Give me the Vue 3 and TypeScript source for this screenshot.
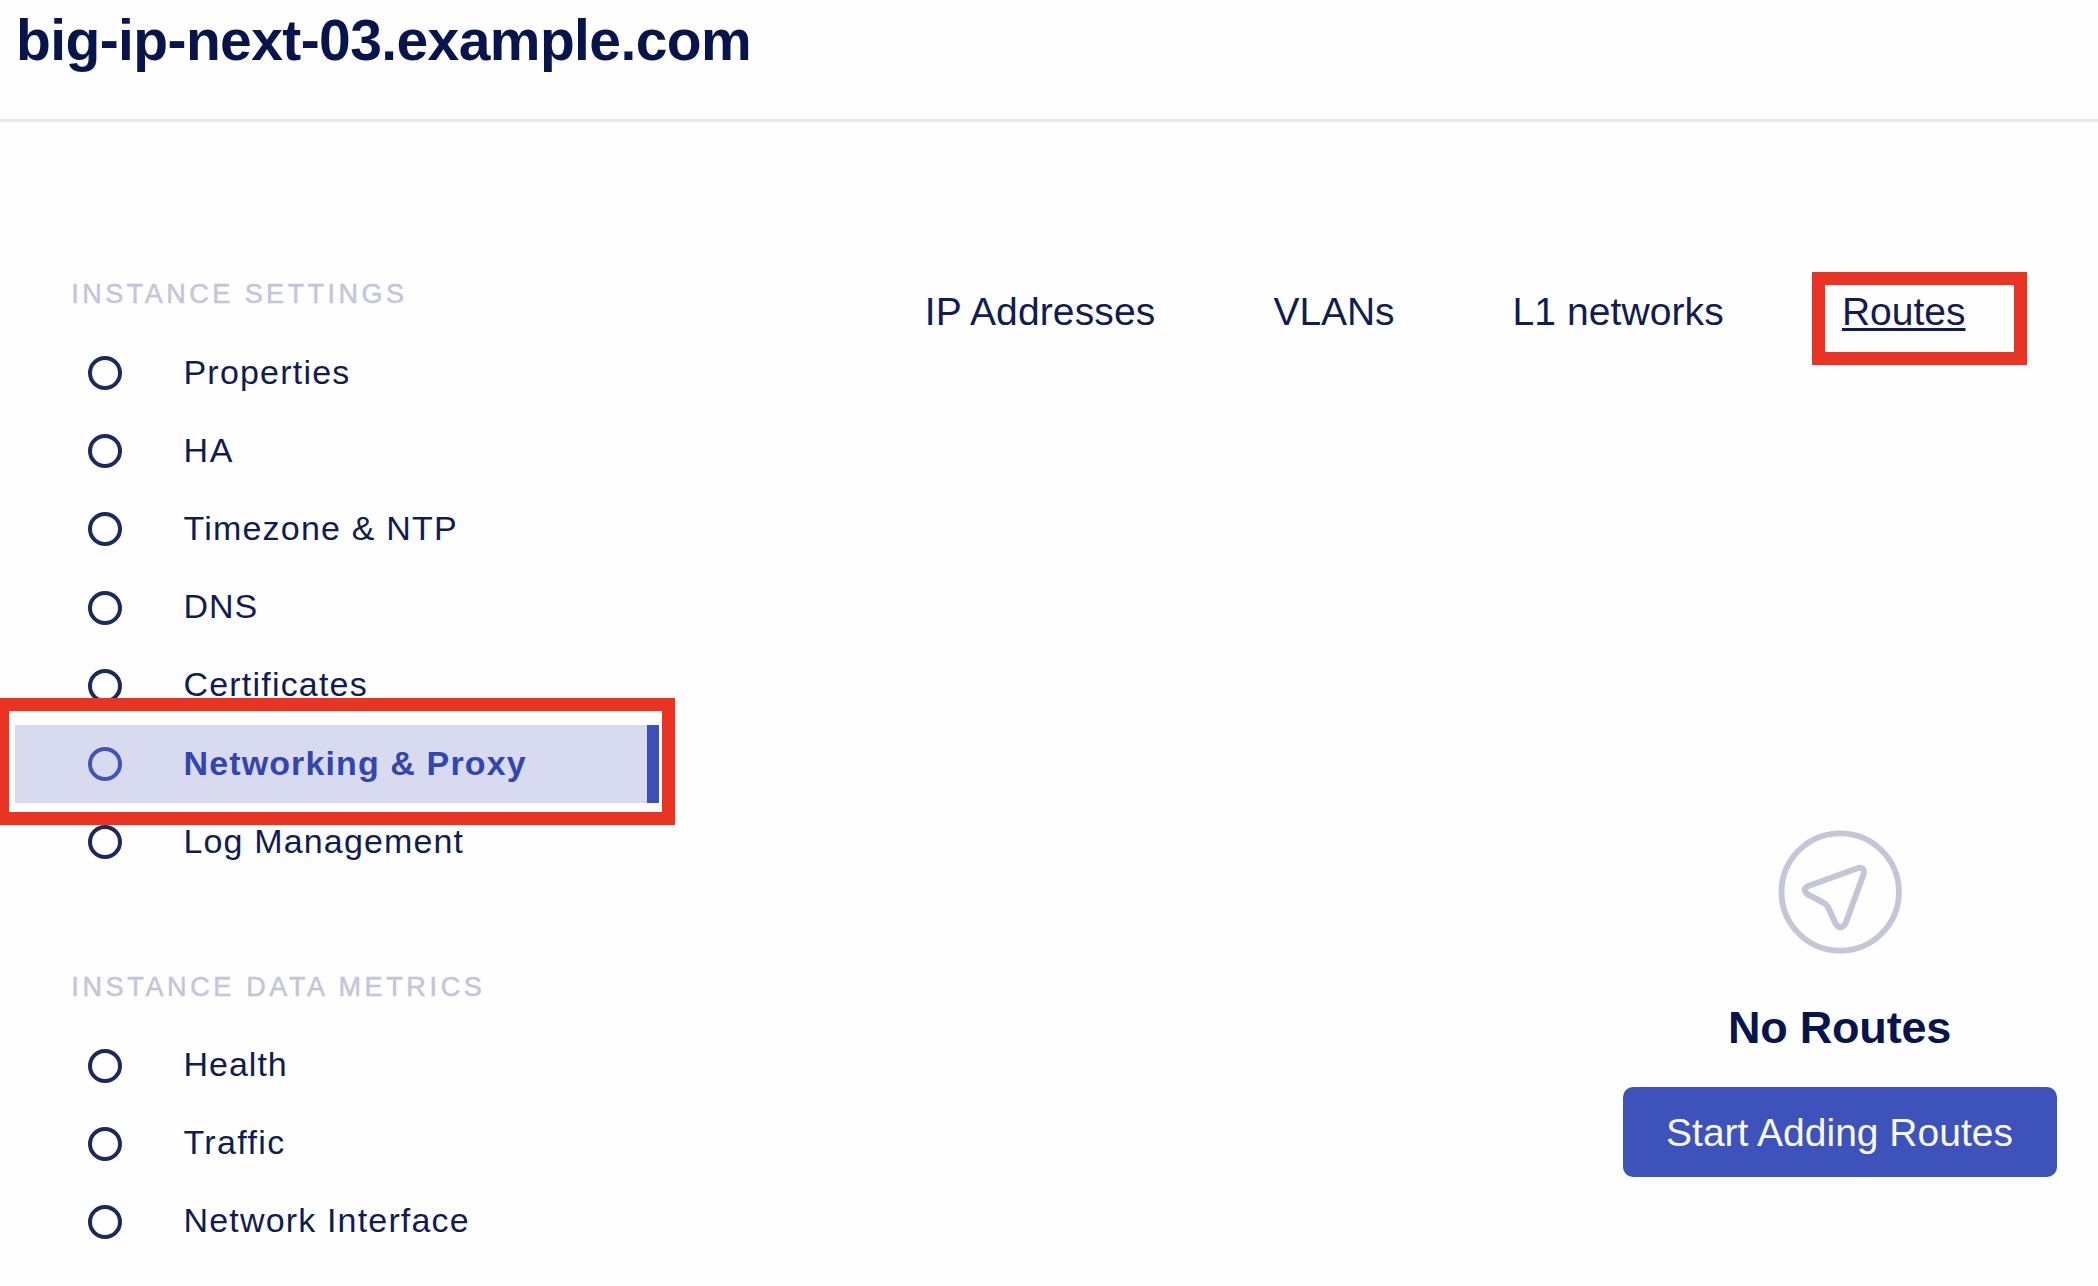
<script setup lang="ts">
interface NavItem {
  label: string
  spacing: number
  active?: boolean
}

interface NavSection {
  title: string
  spacing: number
  items: NavItem[]
}

interface Tab {
  label: string
  spacing: number
  active?: boolean
}

const sections: NavSection[] = [
  {
    title: 'INSTANCE SETTINGS',
    spacing: 3.48,
    items: [
      { label: 'Properties', spacing: 1.2 },
      { label: 'HA', spacing: 1.8 },
      { label: 'Timezone & NTP', spacing: 1.2 },
      { label: 'DNS', spacing: 1 },
      { label: 'Certificates', spacing: 1.2 },
      { label: 'Networking & Proxy', spacing: 1.12, active: true },
      { label: 'Log Management', spacing: 1.15 },
    ],
  },
  {
    title: 'INSTANCE DATA METRICS',
    spacing: 3.65,
    items: [
      { label: 'Health', spacing: 1 },
      { label: 'Traffic', spacing: 1.35 },
      { label: 'Network Interface', spacing: 1.17 },
    ],
  },
]

const tabs: Tab[] = [
  { label: 'IP Addresses', spacing: 0.12 },
  { label: 'VLANs', spacing: -0.1 },
  { label: 'L1 networks', spacing: 0.08 },
  { label: 'Routes', spacing: 0, active: true },
]
</script>

<template>
  <div class="page">
    <header class="header">
      <h1>big-ip-next-03.example.com</h1>
    </header>
    <div class="body">
      <aside class="sidebar">
        <section v-for="section in sections" :key="section.title" class="section">
          <h2 :style="{ letterSpacing: section.spacing + 'px' }">{{ section.title }}</h2>
          <ul>
            <li v-for="item in section.items" :key="item.label" :class="{ active: item.active }">
              <span class="dot"></span>
              <span class="label" :style="{ letterSpacing: item.spacing + 'px' }">{{ item.label }}</span>
              <span v-if="item.active" class="highlight nav-highlight"></span>
            </li>
          </ul>
        </section>
      </aside>
      <main class="content">
        <nav class="tabs">
          <a v-for="tab in tabs" :key="tab.label" :class="{ active: tab.active }">
            <span class="tab-label" :style="{ letterSpacing: tab.spacing + 'px' }">{{ tab.label }}</span>
            <span v-if="tab.active" class="highlight tab-highlight"></span>
          </a>
        </nav>
        <div class="empty">
          <svg width="124" height="124" viewBox="0 0 124 124" fill="none" stroke="#c3c6d6">
            <circle cx="62.2" cy="62" r="58.7" stroke-width="5.8" />
            <path
              d="M80 38 L30.5 56 Q24 59 29 64 L45 72.5 Q48.5 74 50 77 L57.5 93.5 Q62.5 101 67.5 93.5 L85.5 44.5 Q87 36.5 80 38 Z"
              stroke-width="6"
              stroke-linejoin="round"
            />
          </svg>
          <h3>No Routes</h3>
          <button type="button"><span>Start Adding Routes</span></button>
        </div>
      </main>
    </div>
  </div>
</template>

<style>
body {
  margin: 0;
  overflow: hidden;
  background: #fefefe;
}
</style>

<style scoped>
.page {
  display: flex;
  flex-direction: column;
  width: 2098px;
  height: 1286px;
  overflow: hidden;
  background: #fefefe;
  color: #101c52;
  font-family: "Liberation Sans", Arial, sans-serif;
}

h1,
h2,
h3,
ul {
  margin: 0;
  padding: 0;
  list-style: none;
}

.header {
  box-sizing: border-box;
  height: 122px;
  padding: 8px 0 0 16px;
  border-bottom: 3px solid #e7e8f2;
}

h1 {
  color: #08154c;
  font-size: 57px;
  font-weight: 700;
  line-height: 64px;
  letter-spacing: -0.6px;
  white-space: nowrap;
}

.body {
  display: flex;
  flex: 1;
}

.sidebar {
  width: 660px;
  padding-top: 156px;
}

.section + .section {
  margin-top: 89.2px;
}

h2 {
  height: 56px;
  padding-left: 71.3px;
  color: #c3c6d8;
  font-size: 27px;
  font-weight: 400;
  line-height: 32px;
  white-space: nowrap;
  -webkit-text-stroke: 0.5px #c3c6d8;
}

li {
  position: relative;
  display: flex;
  align-items: center;
  box-sizing: border-box;
  height: 78.2px;
  margin-left: 15px;
  padding-left: 72.6px;
}

li.active {
  background: #d8dbf0;
  border-right: 12px solid #3a50bb;
  width: 644.4px;
  color: #3346b0;
}

.dot {
  box-sizing: border-box;
  width: 34px;
  height: 34px;
  border: 4.4px solid #1c2960;
  border-radius: 50%;
}

.active .dot {
  border-color: #4254b8;
}

.label {
  margin-left: 61.9px;
  padding-bottom: 3px;
  font-size: 34px;
  line-height: 40px;
  white-space: nowrap;
}

.active .label {
  font-weight: 700;
}

.highlight {
  position: absolute;
  box-sizing: border-box;
  border: 13px solid #e93323;
}

.nav-highlight {
  top: -27px;
  left: -19px;
  width: 679px;
  height: 127px;
}

.content {
  display: flex;
  flex: 1;
  flex-direction: column;
}

.tabs {
  display: flex;
  padding: 168px 0 0 264.8px;
}

.tabs a {
  position: relative;
  font-size: 39px;
  line-height: 44px;
  white-space: nowrap;
}

.tabs a + a {
  margin-left: 118.2px;
}

.tabs a.active .tab-label {
  text-decoration: underline;
  text-decoration-thickness: 3px;
  text-underline-offset: 3px;
}

.tab-highlight {
  top: -18px;
  left: -30px;
  width: 215px;
  height: 93px;
}

.empty {
  display: flex;
  flex-direction: column;
  align-items: center;
  align-self: flex-end;
  width: 434px;
  margin: 496px 41.5px 0 0;
}

h3 {
  margin-top: 48px;
  color: #08154c;
  font-size: 45px;
  font-weight: 700;
  line-height: 52px;
  letter-spacing: -0.2px;
  white-space: nowrap;
}

button {
  width: 434px;
  height: 90px;
  margin-top: 33px;
  padding: 2px 0 0;
  border: 0;
  border-radius: 10px;
  background: #3d52bb;
  color: #f8f9ff;
  font: 39px/44px "Liberation Sans", Arial, sans-serif;
  white-space: nowrap;
}
</style>
